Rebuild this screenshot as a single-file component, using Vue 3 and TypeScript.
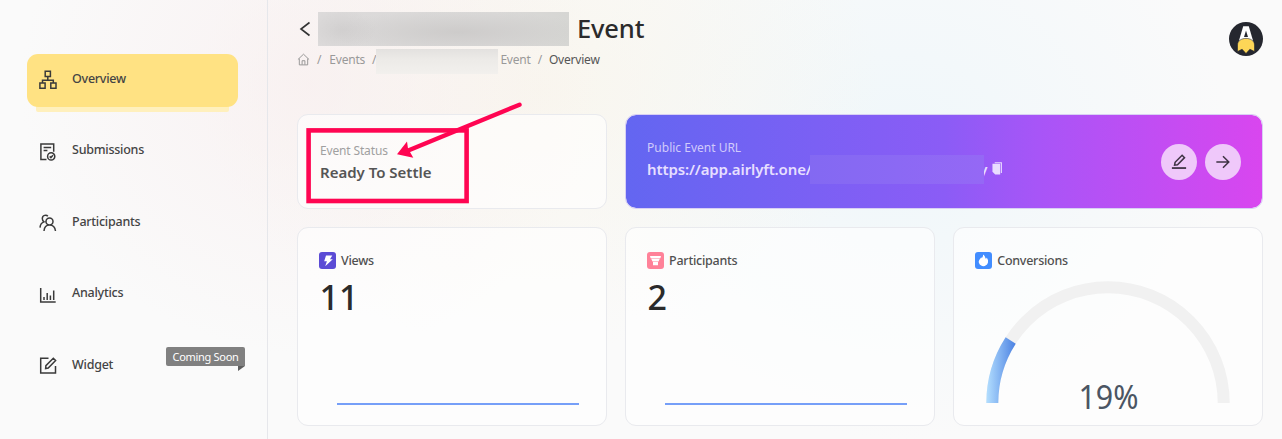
<script setup lang="ts">
interface NavItem {
  label: string
  icon: string
  active?: boolean
  badge?: string
}

const navItems: NavItem[] = [
  { label: 'Overview', icon: 'M6.200 .2h5.200v5.200H6.200zM8.800 5.400v3.800M3.500 12V9.200h10.800V12M.9 12h5.200v5.200H.9zM11.800 12h5.200v5.200h-5.200z', active: true },
  { label: 'Submissions', icon: 'M7.5 16.500H1.900V.9h12.800v7.800M4.6 4.500h7.600M4.600 7.400h3.800M15.800 13.400a3.600 3.600 0 1 1-7.200 0a3.600 3.600 0 0 1 7.200 0M10.700 13.400l1.200 1.200 2-2.300' },
  { label: 'Participants', icon: 'M14 7.400a3.500 3.500 0 1 1-7 0a3.500 3.500 0 0 1 7 0M5 17c.3-4 2.400-6 5.500-6s5.500 2 6 6M8.800 2.300C7.600 .6 3.400 .8 3.300 4.600c0 1.500.7 2.700 1.700 3.300C2.500 8.800 1.200 10.700 1 13.600' },
  { label: 'Analytics', icon: 'M1.700 2v14h15M5 14v-3M8.200 14V7M11.400 14V9.500M14.700 14V4.500' },
  { label: 'Widget', icon: 'M9.500 1.200H1.700v14.800h14.800V9M6.600 11.500l.3-2.800 7.400-7.400 2.300 2.300-7.400 7.400z', badge: 'Coming Soon' },
]

const stats = [
  { label: 'Views', value: '11', tone: 'violet', glyph: 'M7 3.500h6.300l-2.300 3.800h2.800l-7.600 7 1.700-5H5.200z' },
  { label: 'Participants', value: '2', tone: 'rose', glyph: 'M3 4h11l-.6 2.200H3.600zM4.200 6.700h8.600l-1.300 2.800h-6zM6 10h5v3.200H6z' },
]

const share = 2 / 11
const radius = 115.7
const arc = Math.PI * radius
const filled = arc * share
</script>

<template>
  <div class="page">
    <aside class="sidebar">
      <div v-for="item in navItems" :key="item.label" class="nav-item" :class="{ active: item.active }">
        <svg class="nav-icon" viewBox="0 0 18 18"><path :d="item.icon" /></svg>
        <span class="nav-label">{{ item.label }}</span>
        <span v-if="item.badge" class="badge">{{ item.badge }}</span>
      </div>
    </aside>

    <main class="main">
      <header class="header">
        <div>
          <div class="title-row">
            <svg class="back" viewBox="0 0 12 16"><path d="M10.500 1.500L2 8l8.500 6.500" /></svg>
            <span class="title-mask"></span>
            <h1>Event</h1>
          </div>
          <div class="crumbs">
            <svg class="home" viewBox="0 0 14 14"><path d="M1 7l6-5.700L13 7M2.500 6v6.800h9V6M5.500 12.500V8.300h3v4.200" /></svg>
            <span class="crumb slash first">/</span>
            <span class="crumb">Events</span>
            <span class="crumb slash second">/</span>
            <span class="crumb-mask"></span>
            <span class="crumb">Event</span>
            <span class="crumb slash third">/</span>
            <span class="crumb current">Overview</span>
          </div>
        </div>
        <svg class="avatar" viewBox="0 0 34 34">
          <circle cx="17" cy="17" r="17" fill="#25272f" />
          <path d="M14.200 4.200h5.600L25 22H9z" fill="#fff" />
          <path d="M17 8.500l2 6.500h-4z" fill="#25272f" />
          <path d="M8.500 29.500V23c0-8.800 17-8.800 17 0v6.500l-4.600-2.300L17 31.500l-3.900-4.300z" fill="#fdd657" stroke="#25272f" stroke-width=".6" />
        </svg>
      </header>

      <section class="grid">
        <article class="card status">
          <div class="muted">Event Status</div>
          <div class="strong">Ready To Settle</div>
        </article>

        <article class="card url">
          <div class="url-copy">
            <div class="muted">Public Event URL</div>
            <div class="link">
              <span class="strong">https://app.airlyft.one/</span>
              <span class="url-mask"></span>
              <span class="strong tail">y</span>
              <svg class="copy" viewBox="0 0 11 14"><path d="M3 .7h7.300V12" fill="none" stroke="#e9dcff" stroke-width="1.200" /><path d="M.5 1.700h8.500V13.500H3.500L.5 10.500z" fill="#e9dcff" /></svg>
            </div>
          </div>
          <button class="round" aria-label="Edit">
            <svg viewBox="0 0 18 18"><path d="M1 15.800h16" stroke-width="2" /><path d="M4 12.500l.6-3.200L12.500 1.400l2.700 2.700L7.300 12z" /></svg>
          </button>
          <button class="round" aria-label="Open">
            <svg viewBox="0 0 18 18"><path d="M1.500 9h14M9 2.500L15.500 9 9 15.500" /></svg>
          </button>
        </article>

        <article v-for="stat in stats" :key="stat.label" class="card stat">
          <div class="stat-head">
            <svg class="tile" :class="stat.tone" viewBox="0 0 17 17"><path :d="stat.glyph" /></svg>
            <span>{{ stat.label }}</span>
          </div>
          <div class="value">{{ stat.value }}</div>
          <div class="spark"></div>
        </article>

        <article class="card stat">
          <div class="stat-head">
            <svg class="tile blue" viewBox="0 0 17 17"><path d="M8 2.500c2.500 1.500 2 3.500 3 4.200 0 0 .7-.4.600-1.300 1.700 1.800 1.700 4.200 1.200 5.600-1.600 4.200-7.200 4.200-8.800 0C3 8 6 6.500 6.200 5c.2.500.3 1 .3 1.300C7.800 5.300 8.200 4 8 2.500z" /></svg>
            <span>Conversions</span>
          </div>
          <svg class="gauge" viewBox="0 0 244 142">
            <defs>
              <linearGradient id="fill" gradientUnits="userSpaceOnUse" x1="0" y1="0" x2="30" y2="0">
                <stop offset="0" stop-color="#b5e0ff" />
                <stop offset="1" stop-color="#4a80e2" />
              </linearGradient>
            </defs>
            <path d="M6.300 122a115.700 115.700 0 0 1 231.400 0" fill="none" stroke="#f1f1f1" stroke-width="12" />
            <path d="M6.300 122a115.700 115.700 0 0 1 231.400 0" fill="none" stroke="url(#fill)" stroke-width="12" :stroke-dasharray="`${filled} ${arc}`" />
            <text x="122.500" y="128" text-anchor="middle" textLength="60" lengthAdjust="spacingAndGlyphs">19%</text>
          </svg>
        </article>
      </section>
    </main>

    <svg class="callout" viewBox="0 0 240 110">
      <rect x="8.600" y="30.400" width="158" height="70.600" fill="none" stroke="#ff0552" stroke-width="4.600" />
      <path d="M219.500 4.700L107 51" fill="none" stroke="#ff0552" stroke-width="4.400" stroke-linecap="round" />
      <path d="M97 54.300l10-12.800 1 7 5.300 9.300z" fill="#ff0552" />
    </svg>
  </div>
</template>

<style>
body {
  margin: 0;
  background: #fafafa;
}
</style>

<style scoped>
.page {
  position: relative;
  display: flex;
  width: 1282px;
  height: 439px;
  overflow: hidden;
  font-family: "Noto Sans", "Open Sans", sans-serif;
  color: #444;
  background:
    radial-gradient(ellipse 290px 270px at 310px 85px, rgba(248, 236, 237, 0.6), rgba(250, 242, 243, 0) 100%),
    radial-gradient(ellipse 340px 260px at 540px 90px, rgba(248, 244, 232, 0.65), rgba(249, 246, 240, 0) 100%),
    radial-gradient(ellipse 330px 290px at 900px 150px, rgba(236, 246, 250, 0.75), rgba(242, 248, 251, 0) 100%),
    #fafafa;
}
.sidebar {
  box-sizing: border-box;
  width: 268px;
  flex: none;
  display: flex;
  flex-direction: column;
  gap: 18.500px;
  padding: 53.500px 29px 0 27px;
  border-right: 1px solid #e6e7eb;
}
.nav-item {
  position: relative;
  box-sizing: border-box;
  display: flex;
  align-items: center;
  height: 53px;
  padding-left: 12px;
  border-radius: 11px;
  font-size: 12.500px;
}
.nav-item.active {
  background: #ffe283;
  box-shadow: 0 14px 0 -9px #fff0bd;
}
.nav-icon {
  width: 18px;
  height: 18px;
  margin-right: 15px;
  overflow: visible;
  fill: none;
  stroke: #3a3a3a;
  stroke-width: 1.500;
}
.nav-label {
  margin-top: -4px;
  font-weight: 500;
  letter-spacing: -0.250px;
}
.badge {
  position: absolute;
  left: 139px;
  top: 7px;
  width: 79px;
  height: 19px;
  background: #808080;
  border-radius: 2px 2px 0 2px;
  color: #fff;
  font-size: 11px;
  line-height: 19px;
  text-align: center;
  letter-spacing: -0.300px;
  white-space: nowrap;
}
.badge::after {
  content: "";
  position: absolute;
  right: 0;
  top: 19px;
  width: 0;
  height: 0;
  border-right: 7px solid transparent;
  border-top: 5px solid #5e5e5e;
}
.main {
  flex: none;
  width: 966px;
  padding-left: 29px;
}
.header {
  display: flex;
  justify-content: space-between;
  height: 114px;
}
.title-row {
  display: flex;
  align-items: center;
  height: 34px;
  padding-top: 12px;
}
.back {
  width: 12px;
  height: 16px;
  margin: 0 7px 0 2px;
  fill: none;
  stroke: #333;
  stroke-width: 1.600;
}
.title-mask {
  width: 251px;
  height: 34px;
  background:
    radial-gradient(ellipse 34px 20px at 24px 18px, rgba(203, 201, 201, 0.6), rgba(208, 206, 206, 0)),
    radial-gradient(ellipse 130px 22px at 140px 20px, rgba(202, 200, 199, 0.8), rgba(208, 206, 205, 0)),
    linear-gradient(90deg, #dcdada, #dad9d8 70%, #d6d6d3);
}
h1 {
  margin: -2px 0 0 8px;
  font-size: 25.500px;
  line-height: 34px;
  font-weight: 500;
  letter-spacing: -0.150px;
  color: #2b2b2b;
}
.crumbs {
  display: flex;
  align-items: center;
  height: 26px;
  margin-top: 2px;
  font-size: 12px;
  color: #999;
  letter-spacing: -0.200px;
}
.crumb {
  margin-top: -4px;
}
.home {
  width: 13px;
  height: 13px;
  margin-top: -4px;
  fill: none;
  stroke: #929292;
}
.slash.first { padding: 0 8px 0 7px; }
.slash.second { padding: 0 0 0 7px; }
.slash.third { padding: 0 7px; }
.crumb-mask {
  position: relative;
  flex: none;
  width: 122px;
  height: 25px;
  margin-right: 2px;
  background: linear-gradient(#e3e1df, #edebe8 45%, #f2f0ed);
}
.current { color: #555; }
.avatar {
  width: 34px;
  height: 34px;
  margin: 21.500px 0 0 0;
}
.grid {
  display: grid;
  grid-template-columns: repeat(3, 309.600px);
  grid-template-rows: 95.400px 198.500px;
  gap: 18px 18.500px;
}
.card {
  box-sizing: border-box;
  border: 1px solid #e9eaee;
  border-radius: 11px;
  background: rgba(255, 255, 255, 0.600);
}
.status {
  padding: 25.500px 22px;
}
.muted {
  font-size: 12px;
  line-height: 19px;
  letter-spacing: -0.150px;
  color: #a0a0a0;
}
.strong {
  font-size: 15px;
  line-height: 24px;
  font-weight: 600;
  color: #555;
  white-space: nowrap;
}
.url {
  grid-column: span 2;
  display: flex;
  align-items: center;
  gap: 8px;
  padding: 0 21px 0 21px;
  border-color: #d8d0f4;
  background: linear-gradient(90deg, #6366f1, #8b5cf6 50%, #a855f7 65%, #d946ef) padding-box;
}
.url-copy {
  flex: 1;
  margin-top: -5px;
}
.url .muted {
  color: #d1cafb;
  letter-spacing: 0;
}
.url .strong {
  color: #e6dfff;
  letter-spacing: -0.130px;
}
.link {
  display: flex;
  align-items: center;
}
.url-mask {
  position: relative;
  z-index: 1;
  width: 174px;
  height: 29px;
  margin: -2px 0 -3px -2px;
  background: linear-gradient(90deg, #8369f2, #8b69f4 50%, #9568f5);
}
.url .tail {
  margin-left: -4.500px;
}
.copy {
  width: 10px;
  height: 13px;
  margin-left: 5px;
}
.round {
  display: grid;
  place-items: center;
  width: 36px;
  height: 36px;
  padding: 0;
  border: 0;
  border-radius: 50%;
  background: #efc8fa;
}
.round svg {
  width: 16px;
  height: 16px;
  fill: none;
  stroke: #3f3344;
  stroke-width: 1.700;
}
.stat {
  display: flex;
  flex-direction: column;
  padding: 23.500px 21px 0;
}
.stat-head {
  display: flex;
  align-items: center;
  gap: 5px;
  height: 17px;
  font-size: 12.500px;
  color: #505050;
  font-weight: 500;
  letter-spacing: -0.250px;
}
.tile {
  width: 17px;
  height: 17px;
  border-radius: 3px;
  fill: #fff;
}
.tile.violet { background: #5b4bd5; }
.tile.rose { background: #ff8299; }
.tile.blue { background: #428dff; }
.value {
  margin: 8px 0 0 0.500px;
  font-size: 34px;
  line-height: 41px;
  font-weight: 500;
  color: #2b2b2b;
}
.spark {
  width: 242px;
  height: 2px;
  margin: 85px 0 0 18px;
  background: #769ff8;
}
.gauge {
  flex: none;
  width: 244px;
  height: 142px;
  margin: 12.500px 0 0 10.500px;
}
.gauge text {
  font-size: 33px;
  fill: #4b5563;
}
.callout {
  position: absolute;
  left: 300px;
  top: 100px;
  width: 240px;
  height: 110px;
}
</style>
